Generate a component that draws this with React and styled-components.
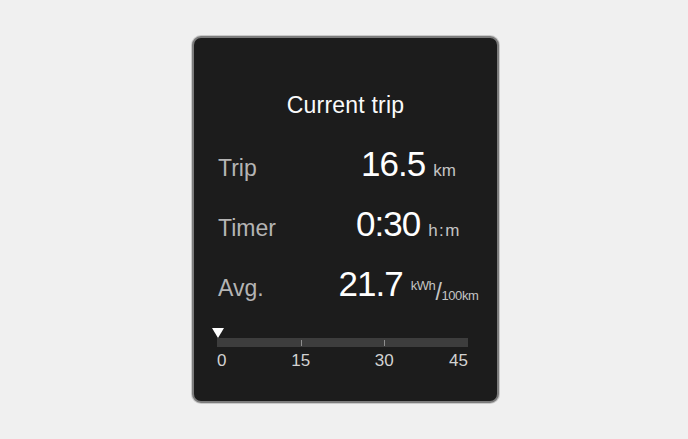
import React from 'react';
import styled, { createGlobalStyle } from 'styled-components';

const GlobalStyle = createGlobalStyle`
  html, body {
    margin: 0;
    padding: 0;
    background: #f0f0f0;
  }
  body {
    font-family: "Liberation Sans", Arial, sans-serif;
  }
`;

const Page = styled.div`
  width: 688px;
  height: 439px;
  display: flex;
  align-items: center;
  justify-content: center;
`;

const Panel = styled.div`
  box-sizing: border-box;
  width: 307px;
  height: 367px;
  margin-left: 3px;
  background: #1c1c1c;
  border: 2px solid #7c7c7c;
  border-radius: 9px;
  box-shadow: 0 0 0 1px #c9c9c9;
  padding: 53px 8px 0 24px;
  display: flex;
  flex-direction: column;
`;

const Title = styled.div`
  margin-right: 16px;
  text-align: center;
  color: #fafafa;
  font-size: 23px;
  line-height: 28px;
  letter-spacing: 0.2px;
`;

const Rows = styled.div`
  margin-top: 27px;
  display: flex;
  flex-direction: column;
  gap: 25px;
`;

const Row = styled.div`
  display: grid;
  grid-template-columns: 110px 1fr;
  align-items: baseline;
`;

const Label = styled.span`
  color: #b4b4b4;
  font-size: 23px;
  line-height: 1;
`;

const Reading = styled.span`
  justify-self: center;
  display: flex;
  align-items: baseline;
  gap: 8px;
  white-space: nowrap;
`;

const Value = styled.span`
  color: #ffffff;
  font-size: 35px;
  line-height: 1;
  letter-spacing: -1px;
`;

const Unit = styled.span`
  color: #c4c4c4;
  font-size: 17px;
  line-height: 1;
  letter-spacing: ${p => p.$spread ? '1.5px' : '0'};
`;

const UnitPart = styled.span`
  font-size: ${p => p.$size}px;
  vertical-align: ${p => p.$shift}px;
  letter-spacing: -0.4px;
`;

const Scale = styled.div`
  margin-top: 24px;
  margin-left: -1px;
  width: 251px;
  display: flex;
  flex-direction: column;
`;

const Marker = styled.div`
  width: 0;
  height: 0;
  margin-left: -5px;
  border-left: 6px solid transparent;
  border-right: 6px solid transparent;
  border-top: 10px solid #ffffff;
`;

const Track = styled.div`
  height: 9px;
  background: #3d3d3d;
  display: grid;
  grid-template-columns: repeat(3, 1fr);
  align-items: center;
`;

const Tick = styled.span`
  justify-self: end;
  width: 1px;
  height: 6px;
  margin-right: -1px;
  background: ${p => p.$hidden ? 'transparent' : '#8e8e8e'};
`;

const ScaleLabels = styled.div`
  margin-top: 5px;
  display: grid;
  grid-template-columns: repeat(6, 1fr);
  color: #d2d2d2;
  font-size: 17px;
  line-height: 1;
`;

const ScaleLabel = styled.span`
  grid-column: ${p => p.$col};
  text-align: ${p => p.$align};
`;

const readings = [
  { label: 'Trip', value: '16.5', unit: 'km' },
  { label: 'Timer', value: '0:30', unit: 'h:m', spread: true },
  { label: 'Avg.', value: '21.7', compound: true },
];

const App = () => {
  return (
    <>
      <GlobalStyle />
      <Page>
        <Panel>
          <Title>Current trip</Title>
          <Rows>
            {readings.map(r => (
              <Row key={r.label}>
                <Label>{r.label}</Label>
                <Reading>
                  <Value>{r.value}</Value>
                  {r.compound ? (
                    <Unit>
                      <UnitPart $size={13} $shift={6}>kWh</UnitPart>
                      <UnitPart $size={23} $shift={-4}>/</UnitPart>
                      <UnitPart $size={13} $shift={-4}>100km</UnitPart>
                    </Unit>
                  ) : (
                    <Unit $spread={r.spread}>{r.unit}</Unit>
                  )}
                </Reading>
              </Row>
            ))}
          </Rows>
          <Scale>
            <Marker />
            <Track>
              <Tick />
              <Tick />
              <Tick $hidden />
            </Track>
            <ScaleLabels>
              <ScaleLabel $col="1" $align="left">0</ScaleLabel>
              <ScaleLabel $col="2 / span 2" $align="center">15</ScaleLabel>
              <ScaleLabel $col="4 / span 2" $align="center">30</ScaleLabel>
              <ScaleLabel $col="6" $align="right">45</ScaleLabel>
            </ScaleLabels>
          </Scale>
        </Panel>
      </Page>
    </>
  );
};

export default App;
